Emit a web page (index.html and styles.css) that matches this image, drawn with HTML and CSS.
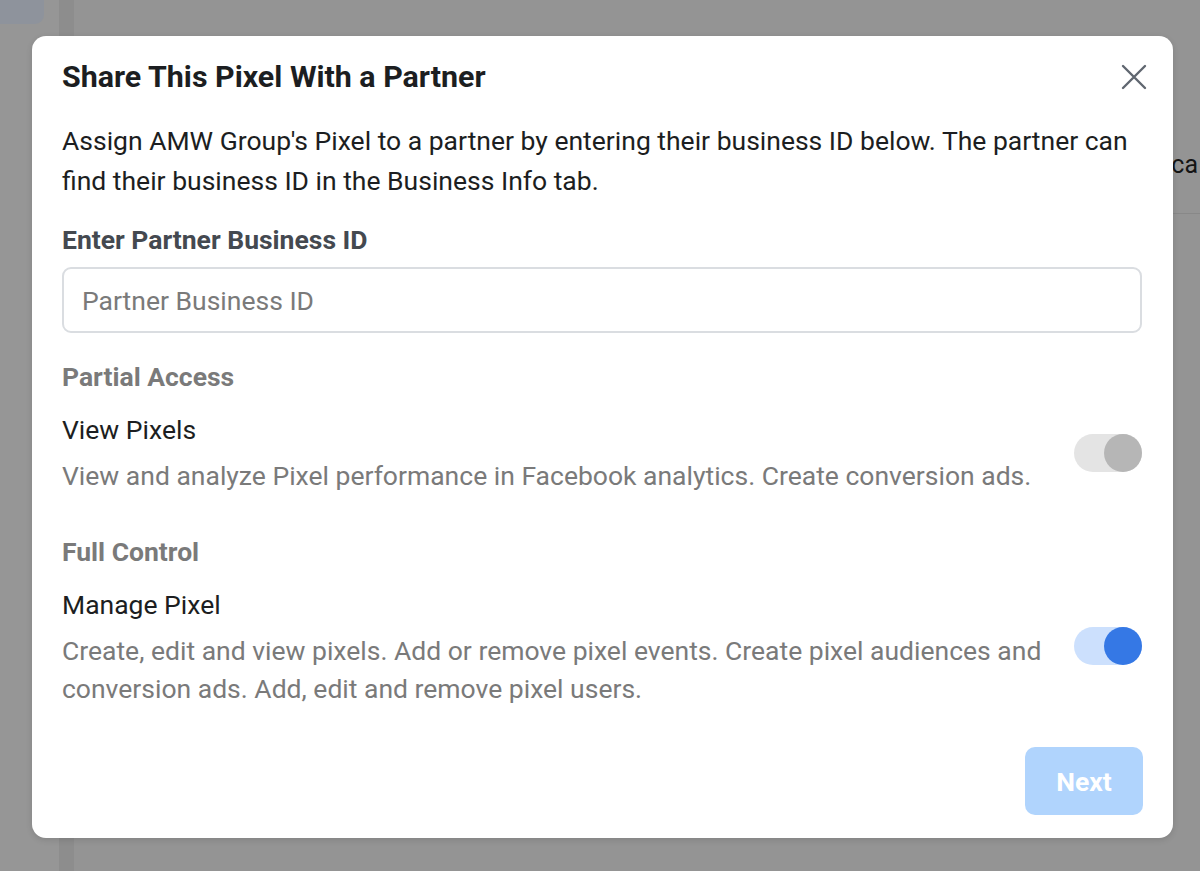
FILE: index.html
```html
<!DOCTYPE html>
<html lang="en">
<head>
<meta charset="utf-8">
<title>Share This Pixel With a Partner</title>
<link rel="stylesheet" href="styles.css">
</head>
<body>
<div class="page">
  <aside class="sidebar">
    <div class="side-item"></div>
  </aside>
  <div class="strip"></div>
  <main class="main">
    <div class="main-head">
      <span class="head-text">ca</span>
    </div>
  </main>
</div>

<div class="modal" role="dialog" aria-labelledby="m-title">
  <div class="modal-header">
    <h1 id="m-title" class="modal-title">Share This Pixel With a Partner</h1>
    <button class="close" aria-label="Close">
      <svg width="26" height="26" viewBox="0 0 26 26"><path d="M2 2L24 24M24 2L2 24" stroke="#606770" stroke-width="2.4" stroke-linecap="round" fill="none"/></svg>
    </button>
  </div>
  <p class="intro">Assign AMW Group's Pixel to a partner by entering their business ID below. The partner can find their business ID in the Business Info tab.</p>
  <label class="field-label" for="pid">Enter Partner Business ID</label>
  <input id="pid" class="field" type="text" placeholder="Partner Business ID">

  <h2 class="section">Partial Access</h2>
  <div class="perm">
    <div class="perm-text">
      <div class="perm-name">View Pixels</div>
      <div class="perm-desc">View and analyze Pixel performance in Facebook analytics. Create conversion ads.</div>
    </div>
    <span class="toggle off"><span class="knob"></span></span>
  </div>

  <h2 class="section">Full Control</h2>
  <div class="perm">
    <div class="perm-text">
      <div class="perm-name">Manage Pixel</div>
      <div class="perm-desc">Create, edit and view pixels. Add or remove pixel events. Create pixel audiences and conversion ads. Add, edit and remove pixel users.</div>
    </div>
    <span class="toggle on"><span class="knob"></span></span>
  </div>

  <div class="footer">
    <button class="next" disabled>Next</button>
  </div>
</div>
</body>
</html>
```

FILE: styles.css
```css
* { box-sizing: border-box; }
html, body { margin: 0; padding: 0; }
body {
  font-family: Roboto, "Liberation Sans", Arial, sans-serif;
  background: #949494;
  width: 1200px;
  height: 871px;
  overflow: hidden;
}

.page {
  display: flex;
  height: 871px;
}
.sidebar {
  width: 59px;
  background: #969696;
}
.side-item {
  width: 44px;
  height: 24px;
  background: #8e939c;
  border-bottom-right-radius: 9px;
}
.strip {
  width: 15px;
  background: #8d8d8d;
}
.main {
  flex: 1;
  background: #949494;
}
.main-head {
  display: flex;
  justify-content: flex-end;
  height: 214px;
  padding-top: 147px;
  padding-right: 2px;
  border-bottom: 1px solid #888888;
}
.head-text {
  white-space: nowrap;
  font-size: 25px;
  line-height: 36px;
  color: #141414;
}

.modal {
  position: absolute;
  left: 32px;
  top: 36px;
  width: 1141px;
  height: 802px;
  background: #ffffff;
  border-radius: 14px;
  padding: 23px 31px 23px 30px;
  box-shadow: 0 2px 6px rgba(0,0,0,0.12);
  display: flex;
  flex-direction: column;
}

.modal-header {
  display: flex;
  align-items: center;
  justify-content: space-between;
}
.modal-title {
  margin: 0;
  font-size: 30.4px;
  line-height: 36px;
  font-weight: 700;
  color: #1c1e21;
}
.close {
  border: 0;
  background: none;
  padding: 0;
  width: 26px;
  height: 26px;
  margin-right: -5px;
  display: flex;
}

.intro {
  margin: 26px 0 0;
  font-size: 26.5px;
  line-height: 40px;
  color: #1c1e21;
}

.field-label {
  display: block;
  margin-top: 24px;
  font-size: 26.5px;
  line-height: 30px;
  font-weight: 700;
  color: #444950;
}
.field {
  display: block;
  margin-top: 12px;
  width: 100%;
  height: 66px;
  border: 2px solid #dadde1;
  border-radius: 9px;
  padding: 0 18px;
  font-family: inherit;
  font-size: 26.5px;
  color: #1c1e21;
  outline: none;
}
.field::placeholder { color: #7a7a7a; }

.section {
  margin: 29px 0 0;
  font-size: 26.5px;
  line-height: 30px;
  font-weight: 700;
  color: #7a7a7a;
}
.perm + .section { margin-top: 42px; }

.perm {
  display: flex;
  align-items: center;
  gap: 24px;
  margin-top: 23px;
}
.perm-text { flex: 1; }
.perm-name {
  font-size: 26.5px;
  line-height: 30px;
  color: #1c1e21;
}
.perm-desc {
  margin-top: 12px;
  font-size: 26.5px;
  line-height: 38px;
  color: #7a7a7a;
}

.toggle {
  position: relative;
  flex: none;
  width: 68px;
  height: 38px;
  border-radius: 19px;
  margin-top: -4px;
}
.toggle .knob {
  position: absolute;
  right: 0;
  top: 0;
  width: 38px;
  height: 38px;
  border-radius: 50%;
}
.toggle.off { background: #e4e4e4; }
.toggle.off .knob { background: #b6b6b6; }
.toggle.on { background: #cce0fd; margin-top: -6px; }
.toggle.on .knob { background: #3578e5; }

.footer {
  margin-top: auto;
  display: flex;
  justify-content: flex-end;
}
.next {
  width: 118px;
  height: 68px;
  border: 0;
  border-radius: 10px;
  background: #b0d4fd;
  color: #ffffff;
  font-family: inherit;
  font-size: 26.5px;
  font-weight: 700;
  margin-right: -1px;
}
```
